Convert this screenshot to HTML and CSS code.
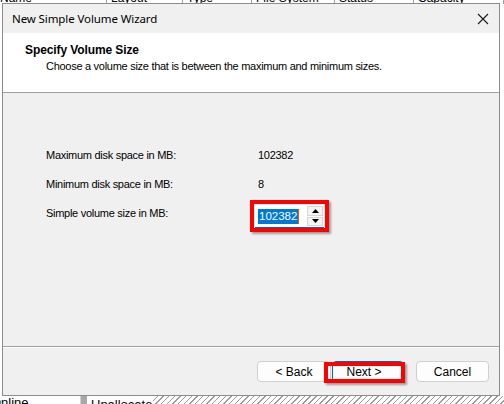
FILE: index.html
```html
<!DOCTYPE html>
<html>
<head>
<meta charset="utf-8">
<link rel="stylesheet" href="styles.css">
</head>
<body>
<div class="app">
  <div class="colhead">
    <span class="col c1">Name</span>
    <span class="col c2">Layout</span>
    <span class="col c3">Type</span>
    <span class="col c4">File System</span>
    <span class="col c5">Status</span>
    <span class="col c6">Capacity</span>
  </div>
  <div class="middle"></div>
  <div class="disks">
    <span class="online">Online</span>
    <span class="divbar"></span>
    <span class="unalloc">Unallocated</span>
    <span class="hatch"></span>
  </div>
</div>

<div class="dialog">
  <div class="titlebar">
    <span class="title">New Simple Volume Wizard</span>
    <svg class="close" width="12" height="12" viewBox="0 0 12 12"><path d="M1 1 L11 11 M11 1 L1 11" stroke="#1a1a1a" stroke-width="1.1" fill="none"/></svg>
  </div>
  <div class="header">
    <div class="h-title">Specify Volume Size</div>
    <div class="h-sub">Choose a volume size that is between the maximum and minimum sizes.</div>
  </div>
  <div class="body">
    <div class="row">
      <span class="label">Maximum disk space in MB:</span>
      <span class="value">102382</span>
    </div>
    <div class="row">
      <span class="label">Minimum disk space in MB:</span>
      <span class="value">8</span>
    </div>
    <div class="row row-input">
      <span class="label">Simple volume size in MB:</span>
      <div class="mark">
        <div class="spinbox">
          <div class="field"><span class="sel">102382</span><span class="caret"></span></div>
          <div class="spin">
            <div class="sbtn"><svg width="7" height="4" viewBox="0 0 7 4"><path d="M3.5 0 L7 4 L0 4 Z" fill="#000"/></svg></div>
            <div class="sbtn"><svg width="7" height="4" viewBox="0 0 7 4"><path d="M0 0 L7 0 L3.5 4 Z" fill="#000"/></svg></div>
          </div>
        </div>
      </div>
    </div>
  </div>
  <div class="footer">
    <button class="btn back">&lt; Back</button>
    <button class="btn next">Next &gt;</button>
    <button class="btn cancel">Cancel</button>
    <div class="nextmark"></div>
  </div>
</div>
</body>
</html>
```
FILE: styles.css
```css
html, body {
  margin: 0;
  padding: 0;
}
body {
  width: 504px;
  height: 404px;
  overflow: hidden;
  background: #ffffff;
  font-family: "Liberation Sans", Arial, sans-serif;
  position: relative;
}
.app {
  display: flex;
  flex-direction: column;
  height: 404px;
}
.colhead {
  display: flex;
  height: 4px;
  overflow: hidden;
  background: #fff;
  font-size: 12px;
  color: #000;
}
.col {
  display: block;
  margin-top: -9px;
  line-height: 14px;
  padding-left: 4px;
  border-right: 1px solid #a0a0a0;
  box-sizing: border-box;
}
.c1 { width: 107px; padding-left: 0; }
.c2 { width: 76px; }
.c3 { width: 69px; }
.c4 { width: 83px; }
.c5 { width: 79px; }
.c6 { width: 90px; }
.middle {
  flex: 1;
  background: #fff;
}
.disks {
  height: 8px;
  display: flex;
  overflow: hidden;
  font-size: 13px;
  color: #000;
}
.online {
  width: 80px;
  line-height: 14px;
  margin-top: 0;
  margin-left: -9px;
  padding-right: 9px;
  box-sizing: content-box;
}
.divbar {
  width: 6px;
  background: #a8a8a8;
  border-left: 1px solid #d0d0d0;
}
.unalloc {
  padding-left: 4px;
  width: 62px;
  line-height: 14px;
  margin-top: 2px;
  color: #1a0010;
}
.hatch {
  flex: 1;
  background: repeating-linear-gradient(135deg, #fff 0 3px, #9a9a9a 3px 4px);
}

.dialog {
  position: absolute;
  left: 2px;
  top: 3px;
  width: 498px;
  height: 393px;
  box-sizing: border-box;
  border: 1px solid #8c8c8c;
  background: #f0f0f0;
  display: flex;
  flex-direction: column;
}
.titlebar {
  height: 29px;
  background: #f0f0f0;
  display: flex;
  align-items: center;
  justify-content: space-between;
  padding: 0 10px 0 9px;
}
.title {
  font-family: "Noto Sans", "Open Sans", sans-serif;
  font-size: 11.5px;
  color: #000;
  letter-spacing: -0.1px;
}
.close {
  margin-top: 1px;
}
.header {
  height: 59px;
  background: #ffffff;
  border-bottom: 1px solid #a0a0a0;
  box-sizing: content-box;
  padding: 0;
}
.h-title {
  font-weight: bold;
  font-size: 12px;
  line-height: 14px;
  margin: 10px 0 0 22px;
  color: #000;
  letter-spacing: -0.1px;
}
.h-sub {
  font-size: 11px;
  line-height: 14px;
  margin: 2px 0 0 43px;
  color: #000;
  letter-spacing: -0.28px;
}
.body {
  height: 254px;
  border-bottom: 1px solid #a0a0a0;
  padding-top: 55px;
  box-sizing: border-box;
  display: flex;
  flex-direction: column;
  gap: 15px;
  font-size: 11px;
  letter-spacing: -0.28px;
  color: #000;
}
.row {
  display: grid;
  grid-template-columns: 212px auto;
  padding-left: 43px;
  line-height: 14px;
}
.row-input {
  margin-top: -6px;
  align-items: start;
}
.row-input .label {
  padding-top: 6px;
}
.mark {
  margin-left: -8px;
  width: 79px;
  height: 32px;
  box-sizing: border-box;
  border: 4px solid #ff0000;
  box-shadow: 2px 2px 2px rgba(0,0,0,0.35);
  background: #f0f0f0;
  padding: 1px 1px 0 1px;
}
.spinbox {
  display: flex;
  height: 23px;
  background: #fff;
  border-bottom: 1px solid #0067c0;
  box-sizing: border-box;
}
.field {
  flex: 1;
  display: flex;
  align-items: center;
  padding-left: 3px;
  font-size: 11.5px;
  letter-spacing: 0;
}
.sel {
  background: #0078d7;
  color: #fff;
  line-height: 15px;
  padding: 0 1px;
}
.caret {
  width: 1px;
  height: 15px;
  background: #e06000;
}
.spin {
  width: 16px;
  display: flex;
  flex-direction: column;
  gap: 1px;
  padding: 1px 1px 1px 0;
}
.sbtn {
  flex: 1;
  background: #f4f4f4;
  border: 1px solid #d6d6d6;
  display: flex;
  align-items: center;
  justify-content: center;
}
.sbtn svg { display: block; }
.footer {
  flex: 1;
  border-top: 1px solid #ffffff;
  position: relative;
  display: flex;
  align-items: flex-start;
  padding: 13px 0 0 254px;
}
.btn {
  font-family: "Liberation Sans", Arial, sans-serif;
  font-size: 12px;
  color: #000;
  height: 21px;
  background: #fdfdfd;
  border: 1px solid #d0d0d0;
  border-radius: 4px;
  padding: 0;
}
.back { width: 74px; }
.next { width: 72px; border-color: #0067c0; margin-left: 1px; padding-right: 8px; }
.cancel { width: 73px; margin-left: 12px; }
.nextmark {
  position: absolute;
  left: 321px;
  top: 14px;
  width: 81px;
  height: 21px;
  box-sizing: border-box;
  border: 4px solid #ff0000;
  box-shadow: 2px 2px 2px rgba(0,0,0,0.35);
}
```
